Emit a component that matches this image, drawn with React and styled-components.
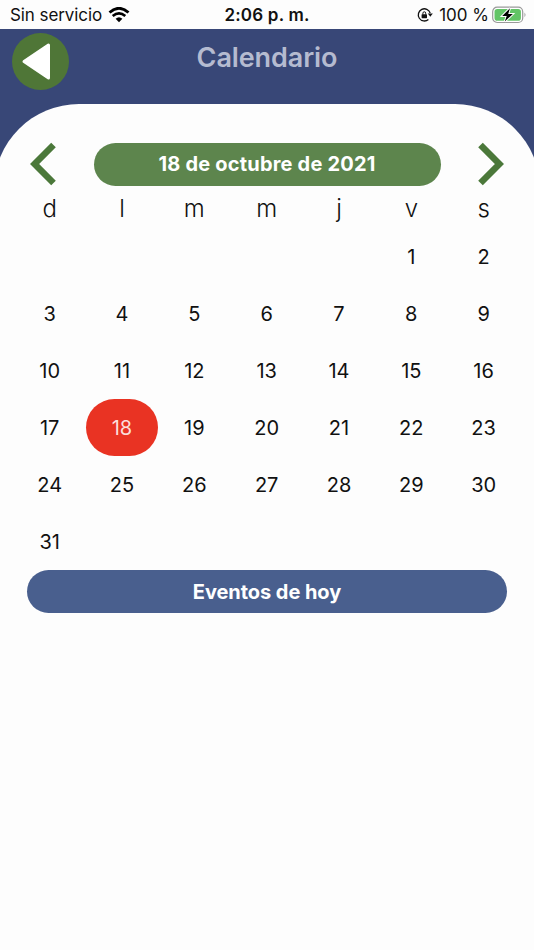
import React from "react";
import styled, { createGlobalStyle, css } from "styled-components";

const GlobalStyle = createGlobalStyle`
  * { box-sizing: border-box; }
  body { margin: 0; background: #fdfdfd; font-family: Inter, "Liberation Sans", sans-serif; }
  button { font: inherit; border: 0; padding: 0; background: none; }
`;

const Screen = styled.div`
  width: 534px;
  height: 950px;
  display: flex;
  flex-direction: column;
  overflow: hidden;
  background: #fdfdfd;
  color: #111;
`;

const StatusBar = styled.div`
  height: 29px;
  flex: none;
  display: grid;
  grid-template-columns: 1fr auto 1fr;
  align-items: center;
  padding: 1px 7px 0 10px;
  font-size: 17px;
  line-height: 28px;
  white-space: nowrap;
`;

const StatusGroup = styled.div`
  display: flex;
  align-items: center;
  justify-content: ${(p) => (p.$end ? "flex-end" : "flex-start")};
  gap: ${(p) => p.$gap}px;
`;

const StatusText = styled.span`
  display: inline-block;
  margin-left: ${(p) => p.$indent || 0}px;
  letter-spacing: ${(p) => p.$spacing || 0}px;
`;

const Clock = styled.div`
  font-weight: 600;
  letter-spacing: 0.2px;
  margin-right: 3px;
`;

const Header = styled.header`
  height: 75px;
  flex: none;
  display: grid;
  grid-template-columns: 58px 1fr 58px;
  padding: 4px 12px 0;
  background: #384777;
`;

const BackButton = styled.button`
  width: 57px;
  height: 57px;
  border-radius: 50%;
  background: #4f7637;
  svg { display: block; }
`;

const Title = styled.h1`
  margin: 0;
  padding-top: 8px;
  text-align: center;
  font-size: 27px;
  line-height: 33px;
  font-weight: 600;
  letter-spacing: -0.1px;
  color: #b5bbd0;
`;

const Backdrop = styled.div`
  height: 846px;
  flex: none;
  background: linear-gradient(#384777 80px, #fdfdfd 80px);
`;

const Sheet = styled.main`
  height: 846px;
  margin: 0 -6px;
  padding: 38px 33px 0;
  border-radius: 85px 85px 0 0;
  background: #fdfdfd;
`;

const MonthBar = styled.div`
  display: flex;
  align-items: center;
  justify-content: space-between;
  height: 44px;
  padding: 0 3px;
`;

const ArrowButton = styled.button`
  width: 26px;
  height: 44px;
  svg { display: block; }
`;

const pill = css`
  display: flex;
  align-items: center;
  justify-content: center;
  height: 43px;
  border-radius: 22px;
  font-size: 20px;
  color: #fff;
`;

const DateLabel = styled.div`
  ${pill}
  width: 347px;
  font-weight: 700;
  letter-spacing: 0.2px;
  background: #5d854d;
`;

const EventsButton = styled.button`
  ${pill}
  width: 480px;
  font-weight: 700;
  letter-spacing: -0.05px;
  background: #495f8e;
`;

const Week = styled.div`
  display: grid;
  grid-template-columns: repeat(7, 72.33px);
  margin-left: -13.5px;
`;

const Weekday = styled.div`
  height: 42px;
  padding-top: 7px;
  text-align: center;
  font-size: 24px;
  line-height: 32px;
  font-weight: 300;
`;

const Day = styled.div`
  display: flex;
  align-items: center;
  justify-content: center;
  height: 57px;
  border-radius: 29px;
  font-size: 20px;
  background: ${(p) => (p.$selected ? "#e93323" : "transparent")};
  color: ${(p) => (p.$selected ? "#fbdedb" : "#111")};
`;

const WifiIcon = () => (
  <svg width="22" height="16" viewBox="0 0 22 16" fill="none" stroke="#000">
    <path d="M1.500 5.500Q11-2.800 20.500 5.500" strokeWidth="2.900" />
    <path d="M4.700 9Q11 3.700 17.300 9" strokeWidth="2.700" />
    <path d="M7.600 11.700Q11 8.600 14.400 11.700L11 15.300Z" fill="#000" stroke="none" />
  </svg>
);

const RotationLockIcon = () => (
  <svg width="16" height="16" viewBox="0 0 16 16" fill="none" stroke="#111">
    <path d="M13.200 6A6.100 6.100 0 1 0 11.400 12.500" strokeWidth="1.300" />
    <path d="M10.800 6.500H15.800L13.300 9.700Z" fill="#111" stroke="none" />
    <rect x="4.600" y="7.200" width="5.400" height="4" rx=".6" fill="#111" stroke="none" />
    <path d="M5.900 7.500V6.200a1.400 1.400 0 0 1 2.800 0V7.500" strokeWidth="1" />
  </svg>
);

const BatteryIcon = () => (
  <svg width="35" height="18" viewBox="0 0 35 18">
    <rect x=".7" y="1.200" width="30" height="15.300" rx="4.500" fill="#fff" stroke="#999" strokeWidth="1.200" />
    <rect x="2.500" y="3" width="26.400" height="11.700" rx="2.800" fill="#62c466" />
    <path d="M32.500 6.500Q34.500 8.800 32.500 11.200Z" fill="#999" />
    <path d="M18 2.200L10.200 10H14.700L12.800 15.600L20.800 7.900H16.200Z" fill="#000" stroke="#fff" strokeWidth="2" paintOrder="stroke" />
  </svg>
);

const BackIcon = () => (
  <svg width="57" height="57" viewBox="0 0 57 57">
    <path d="M12 28.500L36.500 12V45Z" fill="#fff" stroke="#fff" strokeWidth="3" strokeLinejoin="round" />
  </svg>
);

const LeftIcon = () => (
  <svg width="26" height="44" viewBox="0 0 26 44" fill="none" stroke="#4b783a" strokeWidth="6.500">
    <path d="M23.500 3L4.600 22L23.500 41" />
  </svg>
);

const RightIcon = () => (
  <svg width="26" height="44" viewBox="0 0 26 44" fill="none" stroke="#4b783a" strokeWidth="6.500">
    <path d="M2.500 3L21.400 22L2.500 41" />
  </svg>
);

const weekdays = ["d", "l", "m", "m", "j", "v", "s"];
const days = [...Array(5).fill(null), ...Array.from({ length: 31 }, (_, i) => i + 1)];

export default function App() {
  return (
    <Screen>
      <GlobalStyle />
      <StatusBar>
        <StatusGroup $gap={6}>
          <StatusText $spacing={-0.08}>Sin servicio</StatusText>
          <WifiIcon />
        </StatusGroup>
        <Clock>2:06 p. m.</Clock>
        <StatusGroup $end $gap={3}>
          <RotationLockIcon />
          <StatusText $indent={3}>100 %</StatusText>
          <BatteryIcon />
        </StatusGroup>
      </StatusBar>
      <Header>
        <BackButton aria-label="Atrás"><BackIcon /></BackButton>
        <Title>Calendario</Title>
      </Header>
      <Backdrop>
        <Sheet>
          <MonthBar>
            <ArrowButton aria-label="Mes anterior"><LeftIcon /></ArrowButton>
            <DateLabel>18 de octubre de 2021</DateLabel>
            <ArrowButton aria-label="Mes siguiente"><RightIcon /></ArrowButton>
          </MonthBar>
          <Week>
            {weekdays.map((name, i) => <Weekday key={i}>{name}</Weekday>)}
            {days.map((day, i) => <Day key={i} $selected={day === 18}>{day}</Day>)}
          </Week>
          <EventsButton>Eventos de hoy</EventsButton>
        </Sheet>
      </Backdrop>
    </Screen>
  );
}
